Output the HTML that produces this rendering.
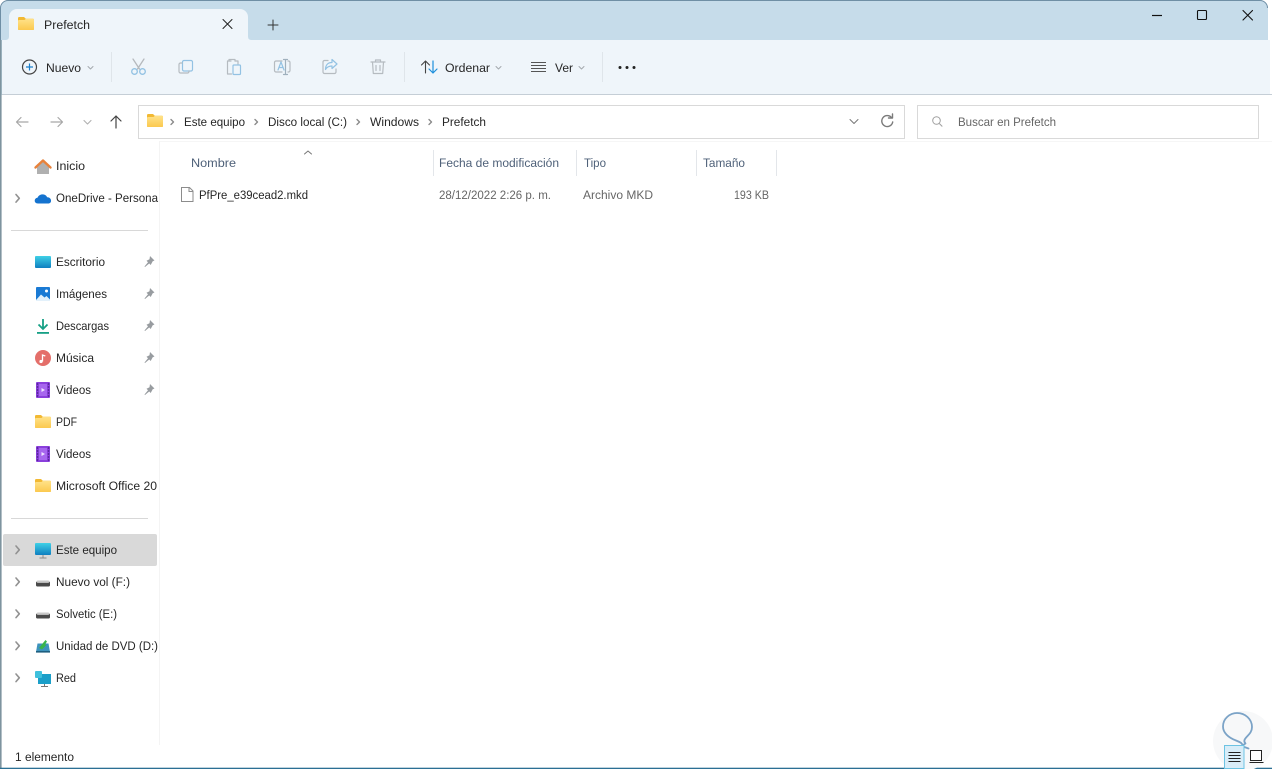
<!DOCTYPE html>
<html lang="es">
<head>
<meta charset="utf-8">
<title>Prefetch</title>
<style>
html,body{margin:0;padding:0;width:1272px;height:769px;overflow:hidden;background:#fff}
svg{display:block}
text{font-family:"Liberation Sans",sans-serif;font-size:12.4px;fill:#262626}
.g{fill:#666}
.h{fill:#4f6179}
.ln{fill:none;stroke-linecap:round;stroke-linejoin:round}
</style>
</head>
<body>
<svg width="1272" height="769" viewBox="0 0 1272 769" xmlns="http://www.w3.org/2000/svg">
<defs>
<linearGradient id="fg" x1="0" y1="0" x2="0" y2="1"><stop offset="0" stop-color="#ffe28a"/><stop offset="1" stop-color="#fbc94f"/></linearGradient>
<linearGradient id="sc" x1="0" y1="0" x2="0" y2="1"><stop offset="0" stop-color="#3fd0e6"/><stop offset="1" stop-color="#0f7fc0"/></linearGradient>
<g id="folder">
<path d="M0 1.200A1.200 1.200 0 0 1 1.200 0h4.800l1.800 1.800H15a1 1 0 0 1 1 1V12a1 1 0 0 1-1 1H1a1 1 0 0 1-1-1z" fill="#f2b933"/>
<path d="M0 4a1 1 0 0 1 1-1h5.500l1.500-1.200H15a1 1 0 0 1 1 1V12a1 1 0 0 1-1 1H1a1 1 0 0 1-1-1z" fill="url(#fg)"/>
</g>
<g id="pin"><path d="M6 0l4.500 4.500-1.800.7-2 3.800-1.500-1.500L1 11l-.5-.5 3.500-4.200L2.500 4.800l3-1.500z" fill="#989ca0"/></g>
<g id="chev"><path d="M0 0l3.300 3.800L0 7.600" class="ln" stroke="#929292" stroke-width="1.600"/></g>
<g id="video">
<rect x="0" y="0" width="14" height="16" rx="1" fill="#8a3fdc"/>
<rect x="3" y="2" width="8" height="12" fill="#a766ee"/>
<path d="M5.500 6l3.500 2-3.500 2z" fill="#efe4ff"/>
<path d="M.8 2h1.400M.8 5h1.400M.8 8h1.400M.8 11h1.400M.8 14h1.400M11.800 2h1.400M11.800 5h1.400M11.800 8h1.400M11.800 11h1.400M11.800 14h1.400" stroke="#2d1260" stroke-width="1.100"/>
</g>
<g id="drive"><rect x="0" y="2.500" width="14" height="5" rx="1.200" fill="#4a4a4a"/><rect x="0.800" y="1.500" width="12.400" height="2.400" rx="1" fill="#c9c9c9"/></g>
<g id="sbr"><path d="M0 0l2.500 2.500L0 5" class="ln" stroke="#8a8a8a" stroke-width="1.400"/></g>
</defs>

<!-- Window frame -->
<rect width="1272" height="769" fill="#fff"/>
<path d="M0 769V8a8 8 0 0 1 8-8H1260a8 8 0 0 1 8 8V40h2V769z" fill="#c6dcea"/>
<path d="M.5 769V8A7.500 7.500 0 0 1 8 .5H1260a7.500 7.500 0 0 1 7.500 7.500" fill="none" stroke="#6f8fa5" stroke-width="1"/>
<rect x="2" y="40" width="1268" height="54" fill="#eff5fa"/>
<rect x="2" y="94" width="1270" height="1" fill="#c5ced6"/>
<rect x="1" y="95" width="1271" height="674" fill="#fff"/>
<rect x="0" y="40" width="1.600" height="729" fill="#7e949f"/>
<rect x="0" y="767.700" width="1272" height="1.300" fill="#2b6f94"/>

<!-- Tab -->
<path d="M5 40c3 0 4-1 4-4V17a8 8 0 0 1 8-8H240a8 8 0 0 1 8 8V36c0 3 1 4 4 4z" fill="#eff5fa"/>
<use href="#folder" x="18" y="17"/>
<text x="44" y="29" textLength="46" lengthAdjust="spacingAndGlyphs">Prefetch</text>
<path d="M223 19.500l9 9m0-9l-9 9" class="ln" stroke="#222" stroke-width="1"/>
<path d="M273 20v10m-5-5h10" class="ln" stroke="#333" stroke-width="1"/>

<!-- Caption buttons -->
<path d="M1152 15.500h10" stroke="#111" stroke-width="1.200"/>
<rect x="1197.500" y="10.500" width="9" height="9" rx="1" fill="none" stroke="#111" stroke-width="1.100"/>
<path d="M1243 10.500l9.500 9.500m0-9.500L1243 20" class="ln" stroke="#111" stroke-width="1.100"/>

<!-- Toolbar: Nuevo -->
<circle cx="29.500" cy="67" r="7" fill="none" stroke="#444" stroke-width="1.200"/>
<path d="M29.500 63.500v7m-3.500-3.500h7" stroke="#1c7fc9" stroke-width="1.200"/>
<text x="46" y="72" textLength="35" lengthAdjust="spacingAndGlyphs">Nuevo</text>
<path d="M88 66.500l2.500 2.500 2.500-2.500" class="ln" stroke="#a4a9ad" stroke-width="1"/>
<rect x="111" y="52" width="1" height="30" fill="#dfe5ea"/>

<!-- Cut -->
<g class="ln" stroke-width="1.300">
<path d="M133 59l6.500 10M144 59l-6.500 10" stroke="#b5b9bd"/>
<circle cx="134.500" cy="71.500" r="2.800" stroke="#93c2e3"/>
<circle cx="142.500" cy="71.500" r="2.800" stroke="#93c2e3"/>
</g>
<!-- Copy -->
<g class="ln" stroke-width="1.200" stroke="#b5bbc0">
<rect x="182.500" y="60.500" width="10" height="10.500" rx="1.500" stroke="#93c2e3"/>
<path d="M182 63h-1.500a1.500 1.500 0 0 0-1.500 1.500v7a1.500 1.500 0 0 0 1.500 1.500h7a1.500 1.500 0 0 0 1.500-1.500V71"/>
</g>
<!-- Paste -->
<g class="ln" stroke-width="1.200" stroke="#b5bbc0">
<path d="M231 61h-3.500v13h4"/>
<path d="M229 61v-1.500h6V61"/>
<path d="M235 61h3v3"/>
<rect x="233" y="65" width="7.500" height="9.500" rx="1" stroke="#93c2e3"/>
</g>
<!-- Rename -->
<g class="ln" stroke-width="1.200">
<path d="M282 61h-6a1.500 1.500 0 0 0-1.500 1.500v8a1.500 1.500 0 0 0 1.500 1.500h6M288 61h.5a1.500 1.500 0 0 1 1.500 1.500v8a1.500 1.500 0 0 1-1.500 1.500H288" stroke="#b5bbc0"/>
<path d="M278 70l3-8 3 8m-5-2.500h4" stroke="#93c2e3"/>
<path d="M283.500 59.500h4m-2 0v15m-2 0h4" stroke="#9fb0bd"/>
</g>
<!-- Share -->
<g class="ln" stroke-width="1.200">
<path d="M328 60.500h-3.500a1.500 1.500 0 0 0-1.500 1.500v10a1.500 1.500 0 0 0 1.500 1.500h10a1.500 1.500 0 0 0 1.500-1.500V69" stroke="#b5bbc0"/>
<path d="M332 59.500l5 4.500-5 4.500V66c-3 0-5 .8-6.500 3.500 0-4 2-7 6.500-7z" stroke="#93c2e3"/>
</g>
<!-- Delete -->
<g class="ln" stroke-width="1.200" stroke="#b5bbc0">
<path d="M371 62h14M375.500 62v-2h5v2"/>
<path d="M372.500 62l.8 11.500h9.400l.8-11.500"/>
<path d="M376 65.500v5M380 65.500v5"/>
</g>
<rect x="404" y="52" width="1" height="30" fill="#dfe5ea"/>

<!-- Ordenar -->
<path d="M425.500 73V61m-4 4l4-4 4 4" class="ln" stroke="#444" stroke-width="1.100"/>
<path d="M433 61v12m-4-4l4 4 4-4" class="ln" stroke="#1c8fdc" stroke-width="1.200"/>
<text x="445" y="72" textLength="45" lengthAdjust="spacingAndGlyphs">Ordenar</text>
<path d="M496 66.500l2.500 2.500 2.500-2.500" class="ln" stroke="#a4a9ad" stroke-width="1"/>
<!-- Ver -->
<path d="M531 62.500h15M531 65.500h15M531 68.500h15M531 71.500h15" stroke="#555" stroke-width="1"/>
<text x="555" y="72" textLength="18" lengthAdjust="spacingAndGlyphs">Ver</text>
<path d="M579 66.500l2.500 2.500 2.500-2.500" class="ln" stroke="#a4a9ad" stroke-width="1"/>
<rect x="602" y="52" width="1" height="30" fill="#dfe5ea"/>
<circle cx="620" cy="67.500" r="1.500" fill="#222"/><circle cx="627" cy="67.500" r="1.500" fill="#222"/><circle cx="634" cy="67.500" r="1.500" fill="#222"/>

<!-- Nav row -->
<path d="M28 122H16.500m4.500-4.500l-4.500 4.500 4.500 4.500" class="ln" stroke="#a8a8a8" stroke-width="1.200"/>
<path d="M51 122h11.500m-4.500-4.500l4.500 4.500-4.500 4.500" class="ln" stroke="#a8a8a8" stroke-width="1.200"/>
<path d="M84 120.500l3.500 3.500 3.500-3.500" class="ln" stroke="#b0b0b0" stroke-width="1.100"/>
<path d="M116 128V116m-5 5l5-5 5 5" class="ln" stroke="#444" stroke-width="1.200"/>

<!-- Address bar -->
<rect x="138.500" y="105.500" width="766" height="33" fill="#fff" stroke="#d9d9d9"/>
<use href="#folder" x="147" y="114"/>
<use href="#sbr" x="171" y="119.500"/>
<text x="184" y="126" textLength="61" lengthAdjust="spacingAndGlyphs">Este equipo</text>
<use href="#sbr" x="255" y="119.500"/>
<text x="268" y="126" textLength="79" lengthAdjust="spacingAndGlyphs">Disco local (C:)</text>
<use href="#sbr" x="357" y="119.500"/>
<text x="370" y="126" textLength="49" lengthAdjust="spacingAndGlyphs">Windows</text>
<use href="#sbr" x="429" y="119.500"/>
<text x="442" y="126" textLength="44" lengthAdjust="spacingAndGlyphs">Prefetch</text>
<path d="M850 119.500l4 4 4-4" class="ln" stroke="#777" stroke-width="1"/>
<path d="M891.500 117.500a5.500 5.500 0 1 0 1.200 4.500" class="ln" stroke="#7b7b7b" stroke-width="1.400"/>
<path d="M888.500 118h4v-4" class="ln" stroke="#7b7b7b" stroke-width="1.400"/>

<!-- Search -->
<rect x="917.500" y="105.500" width="341" height="33" fill="#fff" stroke="#d9d9d9"/>
<circle cx="936.500" cy="120.500" r="3.800" fill="none" stroke="#a0a0a0" stroke-width="1"/>
<path d="M939.300 123.500l3 3" stroke="#a0a0a0" stroke-width="1"/>
<text x="958" y="126" textLength="98" lengthAdjust="spacingAndGlyphs" class="g">Buscar en Prefetch</text>

<!-- Sidebar -->
<rect x="159" y="141" width="1" height="604" fill="#f4f4f4"/>
<rect x="3" y="534" width="154" height="32" rx="2" fill="#d9d9d9"/>
<rect x="11" y="230" width="137" height="1" fill="#d8d8d8"/>
<rect x="11" y="518" width="137" height="1" fill="#d8d8d8"/>

<!-- Inicio -->
<path d="M37 166.500V174h12v-7.500l-6-5z" fill="#b0b0b0"/>
<path d="M35.500 167.500l7.500-7 7.500 7" fill="none" stroke="#e8823b" stroke-width="2.400" stroke-linejoin="round" stroke-linecap="round"/>
<text x="56" y="170" textLength="29" lengthAdjust="spacingAndGlyphs">Inicio</text>
<!-- OneDrive -->
<use href="#chev" x="16" y="194.500"/>
<path d="M38 203.500c-4.500 0-4-5.500-.5-5.700 1.500-4 7.500-4.800 9.700-.6 4.500-.3 5.500 6.300.8 6.300z" fill="#1573cf"/>
<text x="56" y="202" textLength="102" lengthAdjust="spacingAndGlyphs">OneDrive - Persona</text>

<!-- Pinned -->
<rect x="35" y="256" width="16" height="12" rx="1" fill="url(#sc)"/>
<text x="56" y="266" textLength="49" lengthAdjust="spacingAndGlyphs">Escritorio</text>
<use href="#pin" x="144" y="256"/>

<rect x="36" y="287" width="14" height="14" rx="1" fill="#1a7ad4"/>
<path d="M36 300l5-5.500 3.500 3 2-1.500 3.500 3.500V301H36z" fill="#e3f1fb"/>
<circle cx="46.500" cy="291" r="1.500" fill="#fff"/>
<text x="56" y="298" textLength="51" lengthAdjust="spacingAndGlyphs">Imágenes</text>
<use href="#pin" x="144" y="288"/>

<path d="M43 319v10m-4.500-4.500l4.500 4.500 4.500-4.500" fill="none" stroke="#16a085" stroke-width="1.800"/>
<rect x="37" y="332" width="12" height="1.800" fill="#16a085"/>
<text x="56" y="330" textLength="53" lengthAdjust="spacingAndGlyphs">Descargas</text>
<use href="#pin" x="144" y="320"/>

<circle cx="43" cy="358" r="8" fill="#e46f6a"/>
<path d="M42.500 361.500v-6.500l2.800 1" fill="none" stroke="#fff" stroke-width="1.300"/>
<circle cx="41" cy="361.500" r="1.600" fill="#fff"/>
<text x="56" y="362" textLength="38" lengthAdjust="spacingAndGlyphs">Música</text>
<use href="#pin" x="144" y="352"/>

<use href="#video" x="36" y="382"/>
<text x="56" y="394" textLength="35" lengthAdjust="spacingAndGlyphs">Videos</text>
<use href="#pin" x="144" y="384"/>

<use href="#folder" x="35" y="415"/>
<text x="56" y="426" textLength="21" lengthAdjust="spacingAndGlyphs">PDF</text>

<use href="#video" x="36" y="446"/>
<text x="56" y="458" textLength="35" lengthAdjust="spacingAndGlyphs">Videos</text>

<use href="#folder" x="35" y="479"/>
<text x="56" y="490" textLength="101" lengthAdjust="spacingAndGlyphs">Microsoft Office 20</text>

<!-- This PC -->
<use href="#chev" x="16" y="546"/>
<rect x="35" y="543" width="16" height="12" rx="1" fill="url(#sc)"/>
<path d="M43 555v3m-3.500 0h7" stroke="#8a8a8a" stroke-width="1"/>
<text x="56" y="554" textLength="61" lengthAdjust="spacingAndGlyphs">Este equipo</text>

<use href="#chev" x="16" y="578"/>
<use href="#drive" x="36" y="579"/>
<text x="56" y="586" textLength="74" lengthAdjust="spacingAndGlyphs">Nuevo vol (F:)</text>

<use href="#chev" x="16" y="610"/>
<use href="#drive" x="36" y="611"/>
<text x="56" y="618" textLength="61" lengthAdjust="spacingAndGlyphs">Solvetic (E:)</text>

<use href="#chev" x="16" y="642"/>
<path d="M37.500 643.500h11l1.500 8.500H36z" fill="#3d93bd"/>
<path d="M39 648l4-5 2.500-3 1.500 1.500-2 3 1.500.5-4.500 4.500z" fill="#39b54a"/>
<rect x="36" y="651" width="14" height="1.600" fill="#1f5f80"/>
<text x="56" y="650" textLength="102" lengthAdjust="spacingAndGlyphs">Unidad de DVD (D:)</text>

<use href="#chev" x="16" y="674"/>
<rect x="38" y="674" width="13" height="10" fill="#1b9fc9"/>
<rect x="35" y="671" width="7" height="7" rx="1" fill="#3fc0dc"/>
<path d="M44.500 684v2.500m-3.500 0h7" stroke="#777" stroke-width="1"/>
<text x="56" y="682" textLength="20" lengthAdjust="spacingAndGlyphs">Red</text>

<text x="15" y="761" textLength="59" lengthAdjust="spacingAndGlyphs" fill="#333">1 elemento</text>

<!-- Column headers -->
<rect x="160" y="141" width="1112" height="1" fill="#f6f6f6"/>
<path d="M304.500 154l3.500-3 3.500 3" class="ln" stroke="#777" stroke-width="1"/>
<text x="191" y="167" textLength="45" lengthAdjust="spacingAndGlyphs" class="h">Nombre</text>
<rect x="433" y="150" width="1" height="26" fill="#e3e6ea"/>
<text x="439" y="167" textLength="120" lengthAdjust="spacingAndGlyphs" class="h">Fecha de modificación</text>
<rect x="576" y="150" width="1" height="26" fill="#e3e6ea"/>
<text x="584" y="167" textLength="22" lengthAdjust="spacingAndGlyphs" class="h">Tipo</text>
<rect x="696" y="150" width="1" height="26" fill="#e3e6ea"/>
<text x="703" y="167" textLength="42" lengthAdjust="spacingAndGlyphs" class="h">Tamaño</text>
<rect x="776" y="150" width="1" height="26" fill="#e3e6ea"/>

<!-- File row -->
<path d="M181.500 187.500h8l3.500 3.500v10.500h-11.500z" fill="#fff" stroke="#8c8c8c" stroke-width="1"/>
<path d="M189 187.500v4h4" fill="none" stroke="#8c8c8c" stroke-width="1"/>
<text x="199" y="199" textLength="109" lengthAdjust="spacingAndGlyphs">PfPre_e39cead2.mkd</text>
<text x="439" y="199" textLength="112" lengthAdjust="spacingAndGlyphs" class="g">28/12/2022 2:26 p. m.</text>
<text x="583" y="199" textLength="70" lengthAdjust="spacingAndGlyphs" class="g">Archivo MKD</text>
<text x="734" y="199" textLength="35" lengthAdjust="spacingAndGlyphs" class="g">193 KB</text>

<!-- Watermark -->
<circle cx="1243" cy="741" r="30" fill="#f7f8f9"/>
<path d="M1243 746c-1-3-2-3.500-7-5.500-8-3-13-8-13-14 0-8 7-13.500 14-13.500 8 0 15 6 15 14 0 7-6 9-7.500 13-.5 1.500 0 2.500 1 3.500l-4 2.500 7 2.500" fill="none" stroke="#7ba3c7" stroke-width="1.800" stroke-linejoin="round" stroke-linecap="round"/>

<!-- View buttons -->
<rect x="1224.500" y="745.500" width="19.500" height="23" fill="#d8edf8" stroke="#6cc3e3"/>
<path d="M1228.500 752.500h12M1228.500 755.500h12M1228.500 758.500h12M1228.500 761.500h12" stroke="#222" stroke-width="1"/>
<rect x="1250.500" y="750.500" width="11" height="10" fill="#fff" stroke="#222"/>
<path d="M1249.500 762.500h14" stroke="#222" stroke-width="1"/>
</svg>
</body>
</html>
